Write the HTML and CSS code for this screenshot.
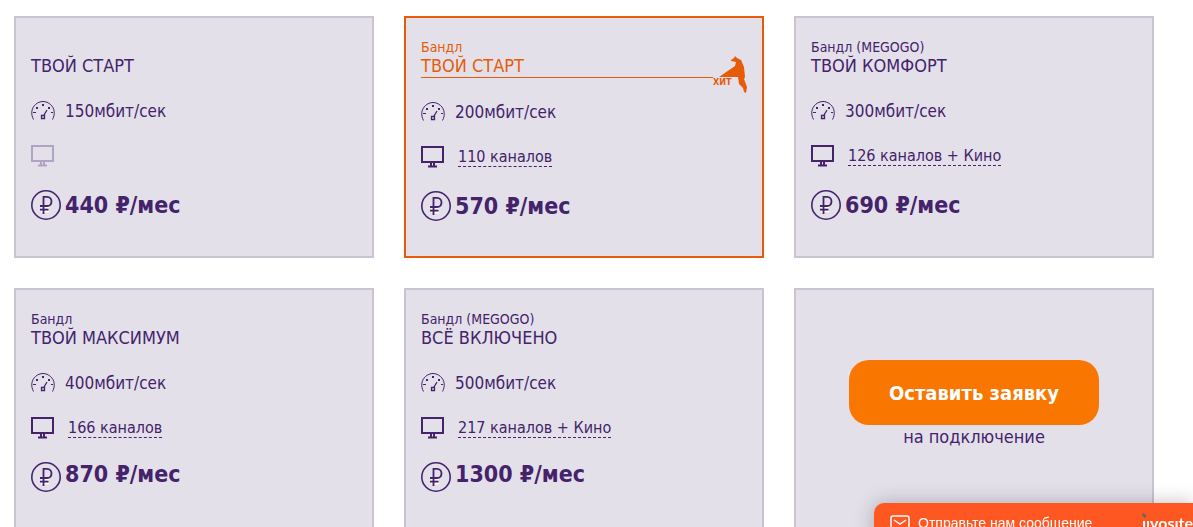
FILE: index.html
```html
<!DOCTYPE html>
<html lang="ru">
<head>
  <meta charset="UTF-8">
  <title>Тарифы</title>
  <link rel="stylesheet" href="styles.css">
</head>
<body>
  <!-- Иконки -->
  <svg class="sprite" aria-hidden="true">
    <symbol id="speed" viewBox="0 0 24 20">
      <path d="M2.500 18.500C-.5 13 .5 7 4.500 3.500 9-.5 15-.5 19.500 3.500 23.500 7 24.500 13 21.500 18.500" fill="none" stroke="currentColor"/>
      <path d="M11 3h2v2h-2zM5 6h2v2H5zM17 6h2v2h-2zM2 11h3v1H2zM20 11h2v1h-2z" fill="currentColor"/>
      <path d="M10.500 14.500h3v3h-3zM13 14l3-5" fill="none" stroke="currentColor" stroke-width="1.300"/>
    </symbol>
    <symbol id="tv" viewBox="0 0 24 24">
      <path d="M1 2h21v15H1zM10 17v4M13 17v4M7 21.500h9" fill="none" stroke="currentColor" stroke-width="2"/>
    </symbol>
    <symbol id="ruble" viewBox="0 0 30 30">
      <circle cx="15" cy="15" r="14.200" fill="none" stroke="currentColor" stroke-width="1.600"/>
      <path d="M10 17.500h8M10 21.500h8" fill="none" stroke="#fff" stroke-width="1.500"/>
      <path d="M12.500 24V6.800h3.500c6 0 6 9.200 0 9.200H9M9 19.700h8.500" fill="none" stroke="currentColor" stroke-width="1.800"/>
    </symbol>
  </svg>

  <main class="tariffs">
    <section class="card">
      <div class="label"></div>
      <h2 class="title">ТВОЙ СТАРТ</h2>
      <div class="speed"><svg class="icon-speed"><use href="#speed"/></svg>150мбит/сек</div>
      <div class="tv tv-off"><svg class="icon-tv"><use href="#tv"/></svg></div>
      <div class="price"><svg class="icon-ruble"><use href="#ruble"/></svg>440 ₽/мес</div>
    </section>

    <section class="card card-hit">
      <div class="label">Бандл</div>
      <h2 class="title">ТВОЙ СТАРТ</h2>
      <div class="hit">
        <svg class="hit-fox" viewBox="0 0 28 38"><path d="M0 22 16 11 17 7 12 6 12 5 15 3 16 1 18 3 22 5 25 12 26 22 25 24 28 32 27 38 25 37 24 33 20 29 19 22z" fill="currentColor"/></svg>
        <span class="hit-text">ХИТ</span>
      </div>
      <div class="speed"><svg class="icon-speed"><use href="#speed"/></svg>200мбит/сек</div>
      <div class="tv"><svg class="icon-tv"><use href="#tv"/></svg><a href="#channels">110 каналов</a></div>
      <div class="price"><svg class="icon-ruble"><use href="#ruble"/></svg>570 ₽/мес</div>
    </section>

    <section class="card">
      <div class="label">Бандл (MEGOGO)</div>
      <h2 class="title">ТВОЙ КОМФОРТ</h2>
      <div class="speed"><svg class="icon-speed"><use href="#speed"/></svg>300мбит/сек</div>
      <div class="tv"><svg class="icon-tv"><use href="#tv"/></svg><a href="#channels">126 каналов + Кино</a></div>
      <div class="price"><svg class="icon-ruble"><use href="#ruble"/></svg>690 ₽/мес</div>
    </section>

    <section class="card">
      <div class="label">Бандл</div>
      <h2 class="title">ТВОЙ МАКСИМУМ</h2>
      <div class="speed"><svg class="icon-speed"><use href="#speed"/></svg>400мбит/сек</div>
      <div class="tv"><svg class="icon-tv"><use href="#tv"/></svg><a href="#channels">166 каналов</a></div>
      <div class="price price-top"><svg class="icon-ruble"><use href="#ruble"/></svg>870 ₽/мес</div>
    </section>

    <section class="card">
      <div class="label">Бандл (MEGOGO)</div>
      <h2 class="title">ВСЁ ВКЛЮЧЕНО</h2>
      <div class="speed"><svg class="icon-speed"><use href="#speed"/></svg>500мбит/сек</div>
      <div class="tv"><svg class="icon-tv"><use href="#tv"/></svg><a href="#channels">217 каналов + Кино</a></div>
      <div class="price price-top"><svg class="icon-ruble"><use href="#ruble"/></svg>1300 ₽/мес</div>
    </section>

    <section class="card card-order">
      <button type="button" class="order-btn">Оставить заявку</button>
      <div class="order-text">на подключение</div>
    </section>
  </main>

  <!-- Чат -->
  <div class="chat">
    <svg class="chat-mail" viewBox="0 0 20 16"><rect x="1" y="1" width="18" height="14" rx="2"/><path d="M4 5l6 4 6-4"/></svg>
    <span class="chat-text">Отправьте нам сообщение</span>
    <span class="chat-logo">ȷıvosıte<svg class="chat-leaf" viewBox="0 0 5 5"><path d="M0 0Q5 1 4 5 0 4 0 0z"/></svg></span>
  </div>
</body>
</html>
```
FILE: styles.css
```css
body {
  margin: 0;
  background: #fff;
  color: #44236b;
  font-family: Tahoma, "DejaVu Sans Condensed", "DejaVu Sans", sans-serif;
  font-size: 18px;
}
.sprite {
  position: absolute;
  width: 0;
  height: 0;
}
.tariffs {
  display: grid;
  grid-template-columns: repeat(3, 1fr);
  gap: 30px;
  max-width: 1140px;
  margin: 16px 39px 0 14px;
}
.card {
  position: relative;
  box-sizing: border-box;
  min-height: 242px;
  padding: 20px 15px;
  border: 2px solid #cac3d6;
  background: #e3e0ea;
}
.label {
  height: 18px;
  font-size: 14px;
  line-height: 18px;
}
.title {
  margin: 0;
  padding-bottom: 2px;
  font-size: 18px;
  font-weight: normal;
  line-height: 19px;
}
.speed, .tv, .price {
  display: flex;
  align-items: center;
}
.speed {
  gap: 10px;
  height: 24px;
  margin-top: 22px;
  font-size: 17px;
}
.tv {
  gap: 13px;
  height: 24px;
  margin-top: 21px;
  font-size: 16px;
}
.tv a {
  color: inherit;
  line-height: 18px;
  text-decoration: none;
  border-bottom: 1px dashed #44236b;
}
.tv-off {
  color: #b0a4c4;
}
.price {
  gap: 4px;
  height: 30px;
  margin-top: 22px;
  font-size: 23px;
  font-weight: bold;
  line-height: 24px;
}
.price-top {
  align-items: flex-start;
}
.icon-speed {
  width: 24px;
  height: 20px;
}
.icon-tv {
  width: 24px;
  height: 24px;
}
.icon-ruble {
  width: 30px;
  height: 30px;
}

/* хит */
.card-hit {
  border-color: #e65c08;
}
.card-hit .label, .card-hit .title {
  color: #e65c08;
}
.card-hit .title {
  margin-right: 34px;
  border-bottom: 1px solid #e65c08;
}
.hit {
  position: absolute;
  top: 37px;
  right: 15px;
  width: 34px;
  height: 38px;
  color: #e65c08;
}
.hit-fox {
  position: absolute;
  top: 0;
  right: 0;
  width: 28px;
  height: 38px;
}
.hit-text {
  position: absolute;
  top: 22px;
  left: 0;
  font-size: 9px;
  font-weight: bold;
  line-height: 10px;
}

/* заявка */
.card-order {
  padding-top: 70px;
  text-align: center;
}
.order-btn {
  width: 250px;
  height: 65px;
  border: none;
  border-radius: 20px;
  background: #f97700;
  color: #fff;
  font-family: inherit;
  font-size: 20px;
  font-weight: bold;
  cursor: pointer;
}
.order-text {
  line-height: 24px;
}

/* чат */
.chat {
  position: fixed;
  right: 0;
  bottom: -16px;
  display: flex;
  align-items: center;
  box-sizing: border-box;
  width: 319px;
  height: 40px;
  padding-left: 16px;
  border-radius: 10px 0 0 0;
  background: #ff5722;
  box-shadow: 0 0 20px rgba(0,0,0,0.25);
  color: #fff;
  font-family: "Liberation Sans", Arial, sans-serif;
  font-size: 14px;
}
.chat-mail {
  width: 20px;
  height: 16px;
  margin-right: 8px;
  fill: none;
  stroke: #fff;
  stroke-width: 1.5;
}
.chat-text {
  flex: 1;
  white-space: nowrap;
}
.chat-logo {
  position: relative;
  font-family: Lato, sans-serif;
  font-size: 16px;
  font-weight: bold;
  line-height: 20px;
}
.chat-leaf {
  position: absolute;
  top: 0;
  left: 0;
  width: 5px;
  height: 5px;
  fill: #666;
}
```
